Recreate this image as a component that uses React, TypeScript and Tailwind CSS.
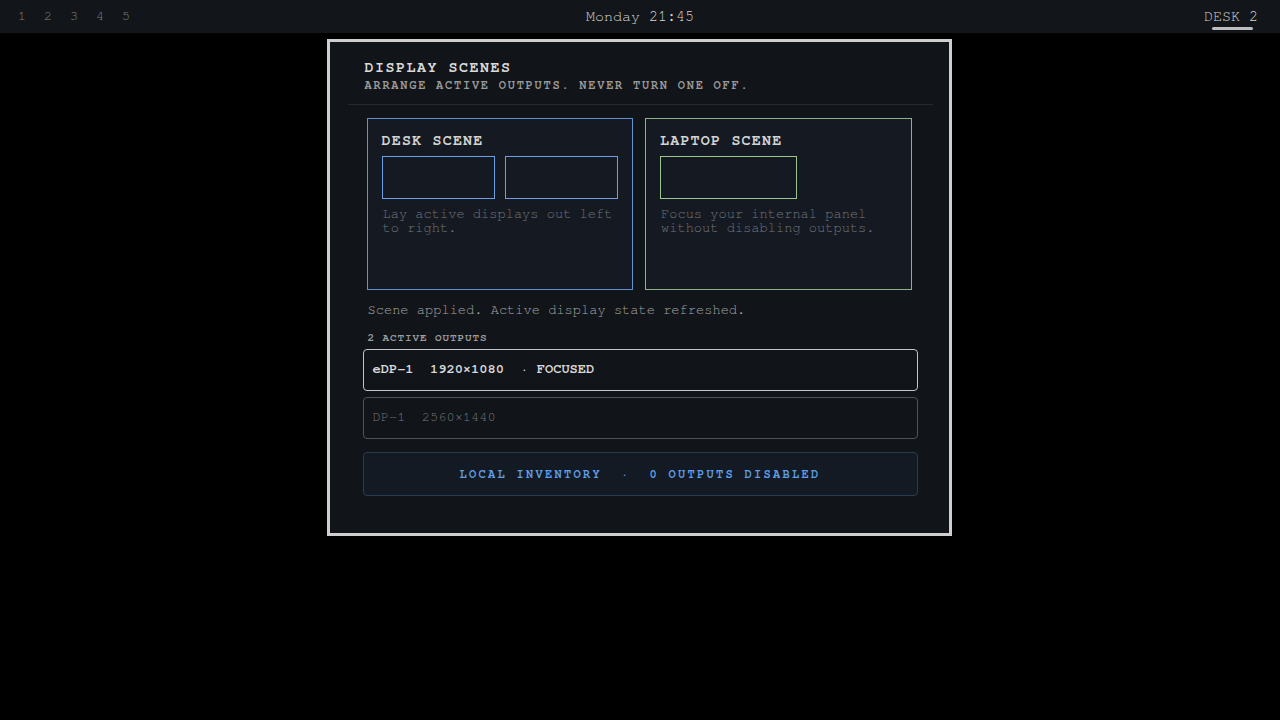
import React from 'react';

const mono = "font-['FreeMono','Liberation_Mono',monospace]";

const workspaces = ['1', '2', '3', '4', '5'];

const TopBar: React.FC = () => (
  <div className="h-[33px] bg-[#121519] flex items-center justify-between relative">
    <div className="flex pl-[9px]">
      {workspaces.map((w) => (
        <span key={w} className="w-[26px] text-center text-[14px] text-[#7b7e82]">
          {w}
        </span>
      ))}
    </div>
    <div className="absolute inset-0 flex items-center justify-center pt-[1px] text-[15px] text-[#d6d6d6] pointer-events-none">
      Monday 21:45
    </div>
    <div className="pr-[22px]">
      <span className="relative text-[15px] text-[#d6d6d6]">
        DESK 2
        <span className="absolute left-[8px] right-[5px] top-[18px] h-[3px] rounded-full bg-[#bdbdbd]" />
      </span>
    </div>
  </div>
);

interface SceneProps {
  title: string;
  color: 'blue' | 'green';
  screens: string[];
  text: string;
}

const SceneCard: React.FC<SceneProps> = ({ title, color, screens, text }) => {
  const border = color === 'blue' ? 'border-[#5f93d3]' : 'border-[#8db584]';
  const inner = color === 'blue' ? 'border-[#6aa0e2]' : 'border-[#9ac78f]';
  return (
    <div className={`h-[172px] border ${border} bg-[#151a22] px-[14px] pt-[13px]`}>
      <div className="text-[15px] leading-[18px] font-bold tracking-[1.2px] text-[#d4d4d4]">{title}</div>
      <div className="flex gap-[10px] mt-[6px]">
        {screens.map((w, i) => (
          <div key={i} className={`h-[43px] border ${inner} bg-[#151a22]`} style={{ width: w }} />
        ))}
      </div>
      <p className="mt-[8px] pl-[1px] text-[13.7px] leading-[14px] text-[#70747b]">{text}</p>
    </div>
  );
};

export default function App() {
  return (
    <div className={`min-h-screen w-full bg-black ${mono}`}>
      <TopBar />
      <div className="flex justify-center pt-[6px]">
        <div className="w-[625px] -translate-x-[1px] border-[3px] border-[#cfcfcf] bg-[#111418] pl-[18px] pr-[16px] pt-[17px] pb-[37px]">
          <div className="border-b border-[#252a30] pl-[17px] pb-[12px]">
            <h1 className="text-[15px] leading-[18px] font-bold tracking-[1.5px] text-[#dadada]">DISPLAY SCENES</h1>
            <p className="text-[12px] leading-[14px] font-bold tracking-[1.75px] text-[#9a9a9a] mt-[1px]">
              ARRANGE ACTIVE OUTPUTS. NEVER TURN ONE OFF.
            </p>
          </div>

          <div className="px-[15px]">
            <div className="grid grid-cols-2 gap-[12px] pl-[4px] pr-[6px] mt-[13px]">
              <SceneCard
                title="DESK SCENE"
                color="blue"
                screens={['114px', '114px']}
                text="Lay active displays out left to right."
              />
              <SceneCard
                title="LAPTOP SCENE"
                color="green"
                screens={['137px']}
                text="Focus your internal panel without disabling outputs."
              />
            </div>

            <p className="mt-[12px] pl-[5px] text-[13.7px] leading-[16px] text-[#a6a6a6]">
              Scene applied. Active display state refreshed.
            </p>

            <div className="mt-[13px] pl-[5px] text-[11px] leading-[14px] font-bold tracking-[0.9px] text-[#9c9c9c]">
              2 ACTIVE OUTPUTS
            </div>

            <div className="mt-[4px] flex flex-col gap-[6px]">
              <div className="h-[42px] flex items-center rounded-[4px] border-[1.5px] border-[#c4c4c4] bg-[#111418] px-[9px] pb-[1px]">
                <span className="whitespace-pre text-[13.7px] font-bold text-[#d8d8d8]">eDP-1  1920×1080  · FOCUSED</span>
              </div>
              <div className="h-[42px] flex items-center rounded-[4px] border-[1.5px] border-[#4f5358] bg-[#111418] px-[9px] pb-[1px]">
                <span className="whitespace-pre text-[13.7px] text-[#73777c]">DP-1  2560×1440</span>
              </div>
            </div>

            <div className="mt-[13px] h-[44px] flex items-center justify-center rounded-[4px] border border-[#2b3a4c] bg-[#141a23] pb-[1px]">
              <span className="whitespace-pre text-[12px] font-bold tracking-[2.3px] text-[#5f9fe8]">
                LOCAL INVENTORY  ·  0 OUTPUTS DISABLED
              </span>
            </div>
          </div>
        </div>
      </div>
    </div>
  );
}
